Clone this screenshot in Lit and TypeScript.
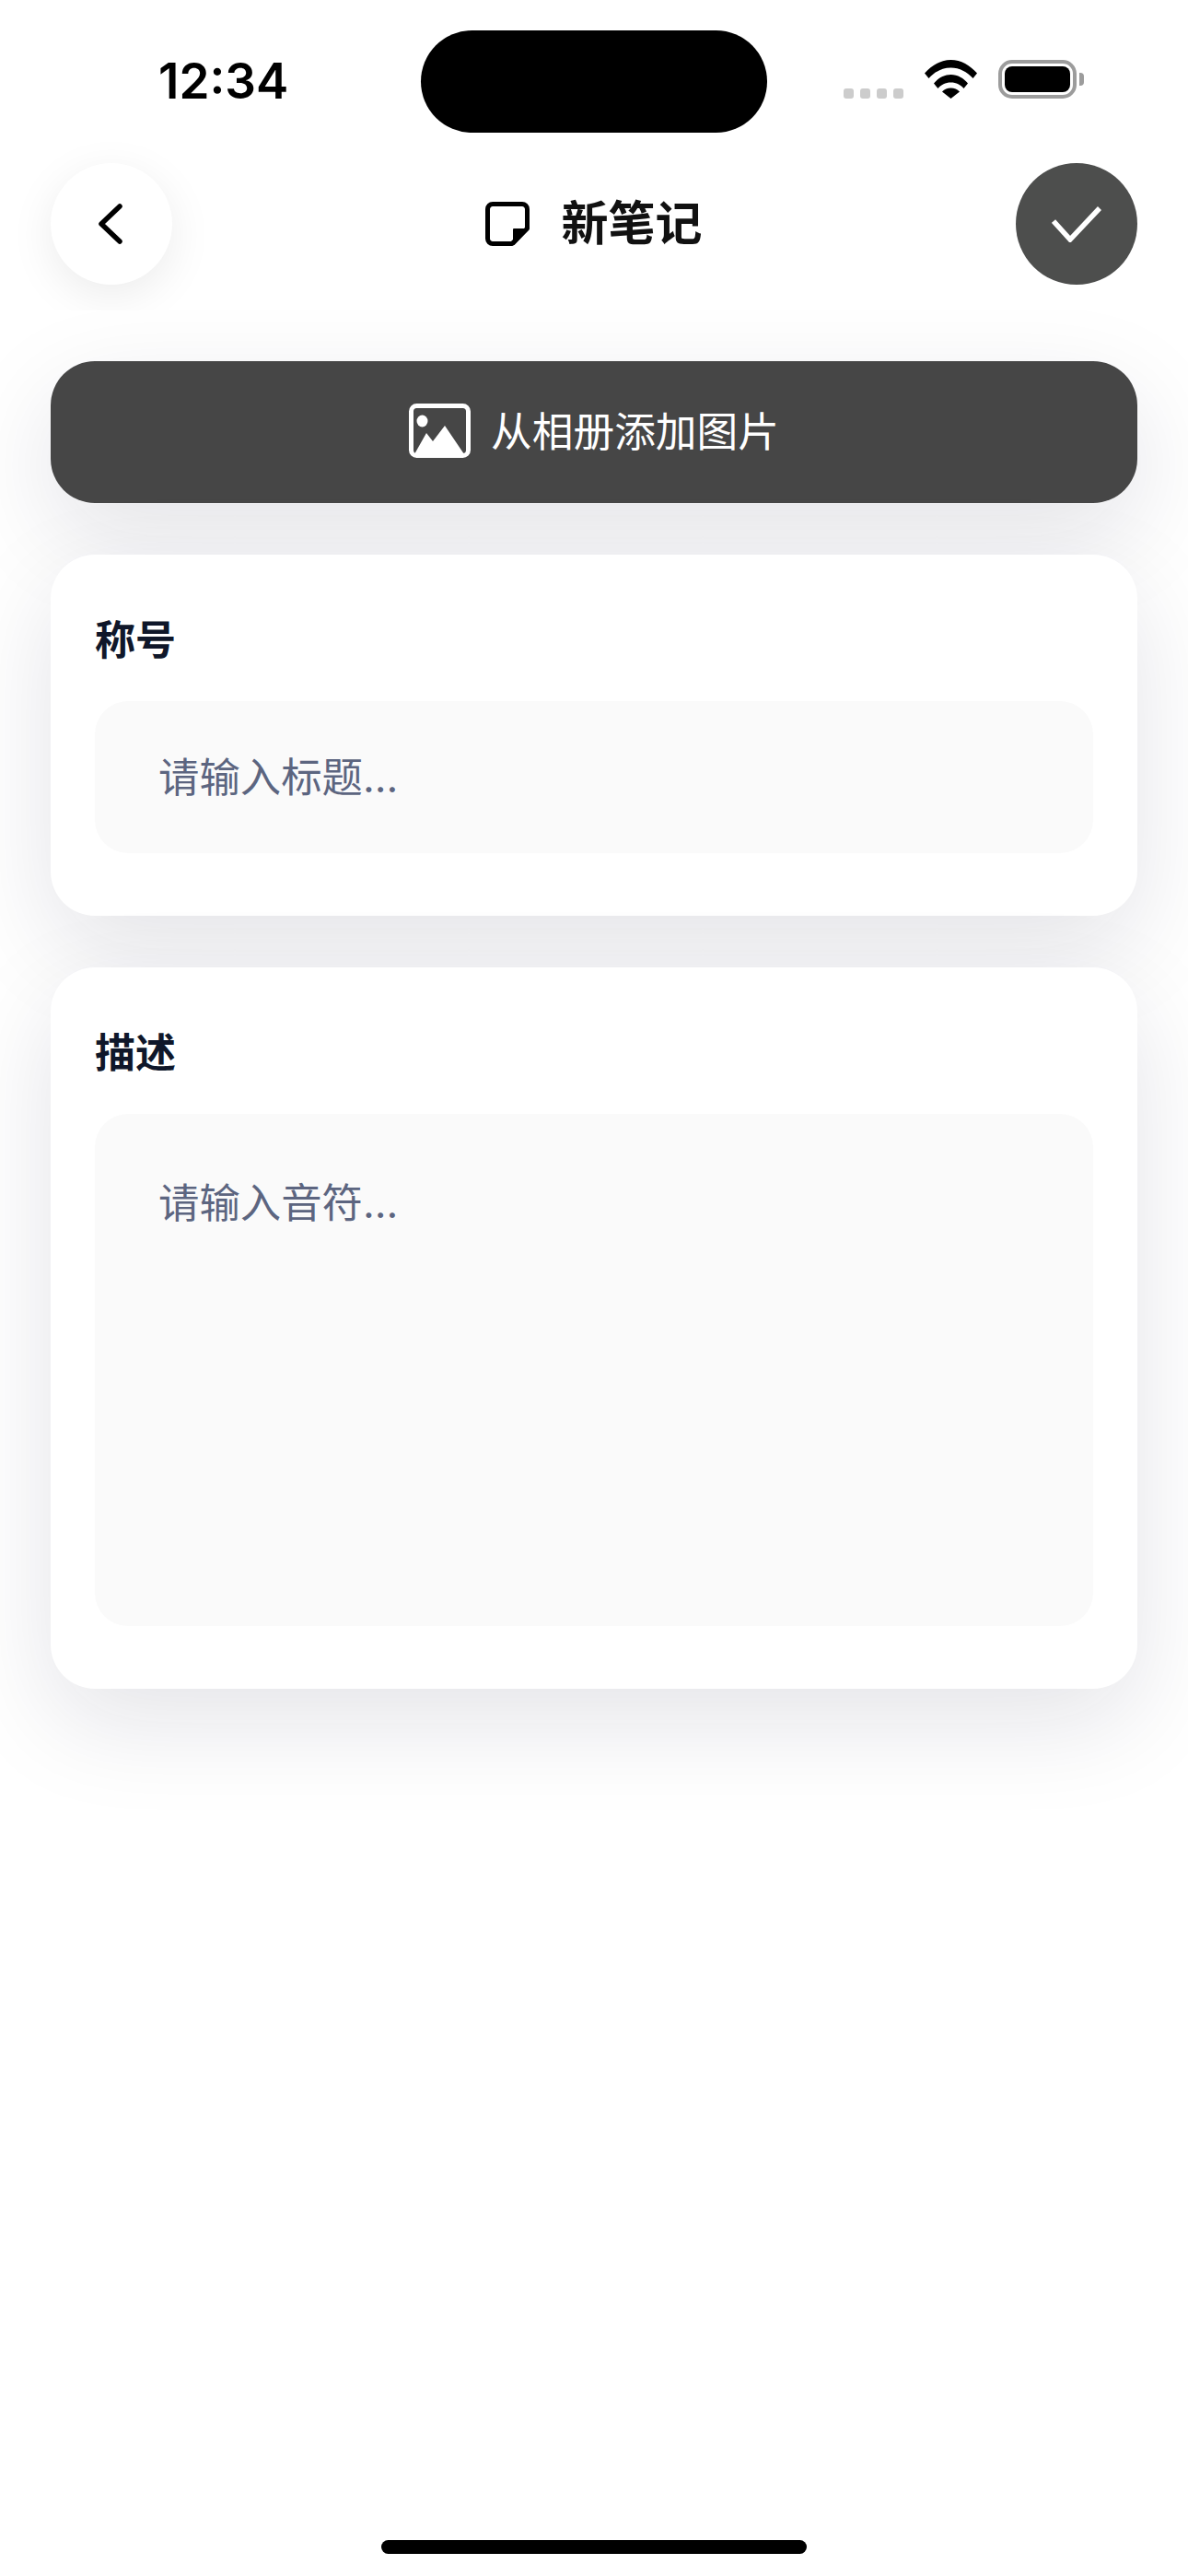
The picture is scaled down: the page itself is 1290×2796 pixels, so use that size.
import { html, css, LitElement } from 'lit'
import { customElement } from 'lit/decorators.js'

@customElement('app-root')
export class AppRoot extends LitElement {
  render () {
    return html`
      <div class="page">
        <header class="top">
          <div class="status">
            <span class="status__time">12:34</span>
            <div class="status__island"></div>
            <div class="status__right">
              <div class="dots"><i></i><i></i><i></i><i></i></div>
              <svg class="wifi" width="57" height="42" viewBox="0 0 57 42">
                <path d="M0 14.500C7.500 6 17.500 0 28.500 0S49.500 6 57 14.500L52.500 20C46 13 38 8.500 28.500 8.500S11 13 4.500 20Z"/>
                <path d="M10 25.500C14.500 20 21 16 28.500 16S42.500 20 47 25.500L42.500 31C39 27 34.500 24.500 28.500 24.500S18 27 14.500 31Z"/>
                <path d="M19 34.500C21.500 31.800 24.800 30.500 28.500 30.500S35.500 31.800 38 34.500L28.500 42Z"/>
              </svg>
              <div class="battery"><div class="battery__fill"></div></div>
              <div class="battery__nub"></div>
            </div>
          </div>

          <div class="nav">
            <button class="round round--light">
              <svg width="48" height="60" viewBox="0 0 48 60" fill="none" stroke="#000" stroke-width="5.500" stroke-linecap="round" stroke-linejoin="round">
                <path d="M33 11 13 30 33 49"/>
              </svg>
            </button>
            <div class="nav__title">
              <svg width="48" height="48" viewBox="0 0 48 48" fill="none">
                <path d="M8 2.500H40A5.500 5.500 0 0 1 45.500 8V29L29 45.500H8A5.500 5.500 0 0 1 2.500 40V8A5.500 5.500 0 0 1 8 2.500Z" stroke="#000" stroke-width="5" stroke-linejoin="round"/>
                <path d="M31 30H46L31 46Z" fill="#000" stroke="#000" stroke-width="2" stroke-linejoin="round"/>
              </svg>
              <span>新笔记</span>
            </div>
            <button class="round round--dark">
              <svg width="54" height="40" viewBox="0 0 54 40" fill="none" stroke="#fff" stroke-width="5.500">
                <path d="M2 17 20 37 52 3"/>
              </svg>
            </button>
          </div>
        </header>

        <main class="main">
          <button class="photo">
            <svg width="67" height="59" viewBox="0 0 67 59">
              <rect x="2.500" y="2.500" width="62" height="54" rx="6" fill="none" stroke="#fff" stroke-width="5"/>
              <ellipse cx="14.500" cy="19" rx="6" ry="6.500" fill="#fff"/>
              <path d="M6 55 19 32 26 41 39 24 60 55Z" fill="#fff"/>
            </svg>
            <span class="photo__text">从相册添加图片</span>
          </button>

          <section class="card">
            <label class="card__label">称号</label>
            <input class="field field--input" placeholder="请输入标题..." />
          </section>

          <section class="card">
            <label class="card__label">描述</label>
            <textarea class="field field--area" placeholder="请输入音符..."></textarea>
          </section>
        </main>

        <div class="home"></div>
      </div>
    `
  }

  static styles = css`
    :host {
      display: block;
      font-family: Inter, "Noto Sans CJK SC", sans-serif;
    }

    .page {
      display: flex;
      flex-direction: column;
      height: 2796px;
      background: #fff;
      overflow: hidden;
    }

    .top {
      position: relative;
      z-index: 1;
      height: 337px;
      flex: none;
      background: #fff;
      overflow: hidden;
    }

    .status {
      display: grid;
      grid-template-columns: 1fr 376px 1fr;
      height: 177px;
      box-sizing: border-box;
      padding-top: 33px;
    }

    .status__time {
      padding: 22px 0 0 172px;
      font-size: 53px;
      font-weight: 600;
      line-height: 66px;
      color: #000;
    }

    .status__island {
      height: 111px;
      border-radius: 56px;
      background: #000;
    }

    .status__right {
      display: flex;
      align-items: flex-start;
      padding: 32px 0 0 83px;
    }

    .dots {
      display: flex;
      gap: 7px;
      margin: 31px 23px 0 0;
    }

    .dots i {
      width: 11px;
      height: 11px;
      border-radius: 3px;
      background: #ccc;
    }

    .wifi {
      flex: none;
      margin-right: 23px;
      fill: #000;
    }

    .battery {
      box-sizing: border-box;
      width: 85px;
      height: 42px;
      padding: 3px;
      border: 4px solid #9c9c9c;
      border-radius: 15px;
    }

    .battery__fill {
      height: 100%;
      border-radius: 8px;
      background: #000;
    }

    .battery__nub {
      width: 5px;
      height: 14px;
      margin: 14px 0 0 3px;
      border-radius: 0 4px 4px 0;
      background: #9c9c9c;
    }

    .nav {
      display: flex;
      align-items: center;
      justify-content: space-between;
      padding: 0 55px;
    }

    .round {
      display: flex;
      align-items: center;
      justify-content: center;
      width: 132px;
      height: 132px;
      padding: 0;
      border: none;
      border-radius: 50%;
    }

    .round--light {
      background: #fff;
      box-shadow: 0 12px 48px rgba(0, 0, 0, 0.08);
    }

    .round--dark {
      background: #4d4e4d;
    }

    .nav__title {
      display: flex;
      align-items: center;
      gap: 34px;
      font-size: 51px;
      font-weight: 700;
      line-height: 66px;
      color: #111;
    }

    .main {
      display: flex;
      flex-direction: column;
      gap: 56px;
      padding: 55px 55px 0;
    }

    .photo {
      display: flex;
      align-items: center;
      justify-content: center;
      gap: 22px;
      height: 154px;
      padding: 0 0 3px;
      border: none;
      border-radius: 48px;
      background: #464646;
      box-shadow: 0 36px 108px rgba(20, 20, 50, 0.115);
      color: #fff;
      font-family: inherit;
      font-size: 44.700px;
    }

    .photo__text {
      padding-bottom: 4px;
    }

    .card {
      display: flex;
      flex-direction: column;
      padding: 60px 48px 68px;
      border-radius: 48px;
      background: #fff;
      box-shadow: 0 36px 108px rgba(20, 20, 50, 0.115);
    }

    .card__label {
      margin-bottom: 33px;
      font-size: 44px;
      font-weight: 700;
      line-height: 66px;
      color: #0f172a;
    }

    .field {
      box-sizing: border-box;
      display: block;
      width: 100%;
      border: none;
      outline: none;
      border-radius: 36px;
      background: #fafafa;
      font-family: inherit;
      font-size: 44.400px;
      color: #0f172a;
      resize: none;
    }

    .field::placeholder {
      color: #5c6580;
      opacity: 1;
    }

    .field--input {
      height: 165px;
      padding: 0 69px;
    }

    .field--area {
      height: 556px;
      padding: 70px 69px;
      line-height: 54px;
    }

    .home {
      position: absolute;
      top: 2757px;
      left: 414px;
      width: 462px;
      height: 15px;
      border-radius: 8px;
      background: #000;
    }
  `
}
